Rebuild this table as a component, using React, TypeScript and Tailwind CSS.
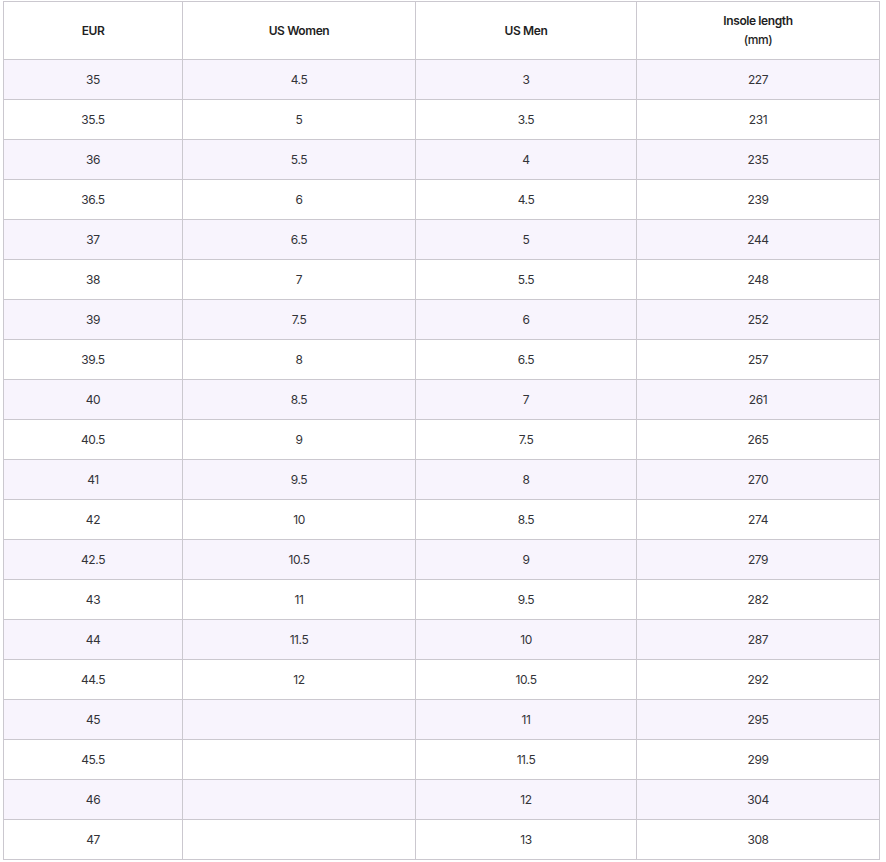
const rows: [string, string, string, string][] = [
  ["35", "4.5", "3", "227"],
  ["35.5", "5", "3.5", "231"],
  ["36", "5.5", "4", "235"],
  ["36.5", "6", "4.5", "239"],
  ["37", "6.5", "5", "244"],
  ["38", "7", "5.5", "248"],
  ["39", "7.5", "6", "252"],
  ["39.5", "8", "6.5", "257"],
  ["40", "8.5", "7", "261"],
  ["40.5", "9", "7.5", "265"],
  ["41", "9.5", "8", "270"],
  ["42", "10", "8.5", "274"],
  ["42.5", "10.5", "9", "279"],
  ["43", "11", "9.5", "282"],
  ["44", "11.5", "10", "287"],
  ["44.5", "12", "10.5", "292"],
  ["45", "", "11", "295"],
  ["45.5", "", "11.5", "299"],
  ["46", "", "12", "304"],
  ["47", "", "13", "308"],
];

export default function App() {
  return (
    <div className="bg-white min-h-screen pl-[3px] pt-px font-['Inter',sans-serif] tracking-[-0.4px]">
      <table className="border-collapse table-fixed w-[876px] text-[12px]">
        <colgroup>
          <col className="w-[179px]" />
          <col className="w-[233px]" />
          <col className="w-[221px]" />
          <col className="w-[243px]" />
        </colgroup>
        <thead>
          <tr className="h-[58px] text-[#1f1f24] leading-[19px]">
            <th className="border border-[#cbc8cf] font-semibold">EUR</th>
            <th className="border border-[#cbc8cf] font-semibold">US Women</th>
            <th className="border border-[#cbc8cf] font-semibold">US Men</th>
            <th className="border border-[#cbc8cf] font-semibold pb-px">
              Insole length
              <br />
              <span className="font-medium">(mm)</span>
            </th>
          </tr>
        </thead>
        <tbody>
          {rows.map((r, i) => (
            <tr
              key={r[0]}
              className={
                i % 2 === 0
                  ? "h-[40px] bg-[#f8f4fd] text-[#333338]"
                  : "h-[40px] bg-white text-[#333338]"
              }
            >
              {r.map((c, j) => (
                <td key={j} className="border border-[#cbc8cf] text-center">
                  {c}
                </td>
              ))}
            </tr>
          ))}
        </tbody>
      </table>
    </div>
  );
}
